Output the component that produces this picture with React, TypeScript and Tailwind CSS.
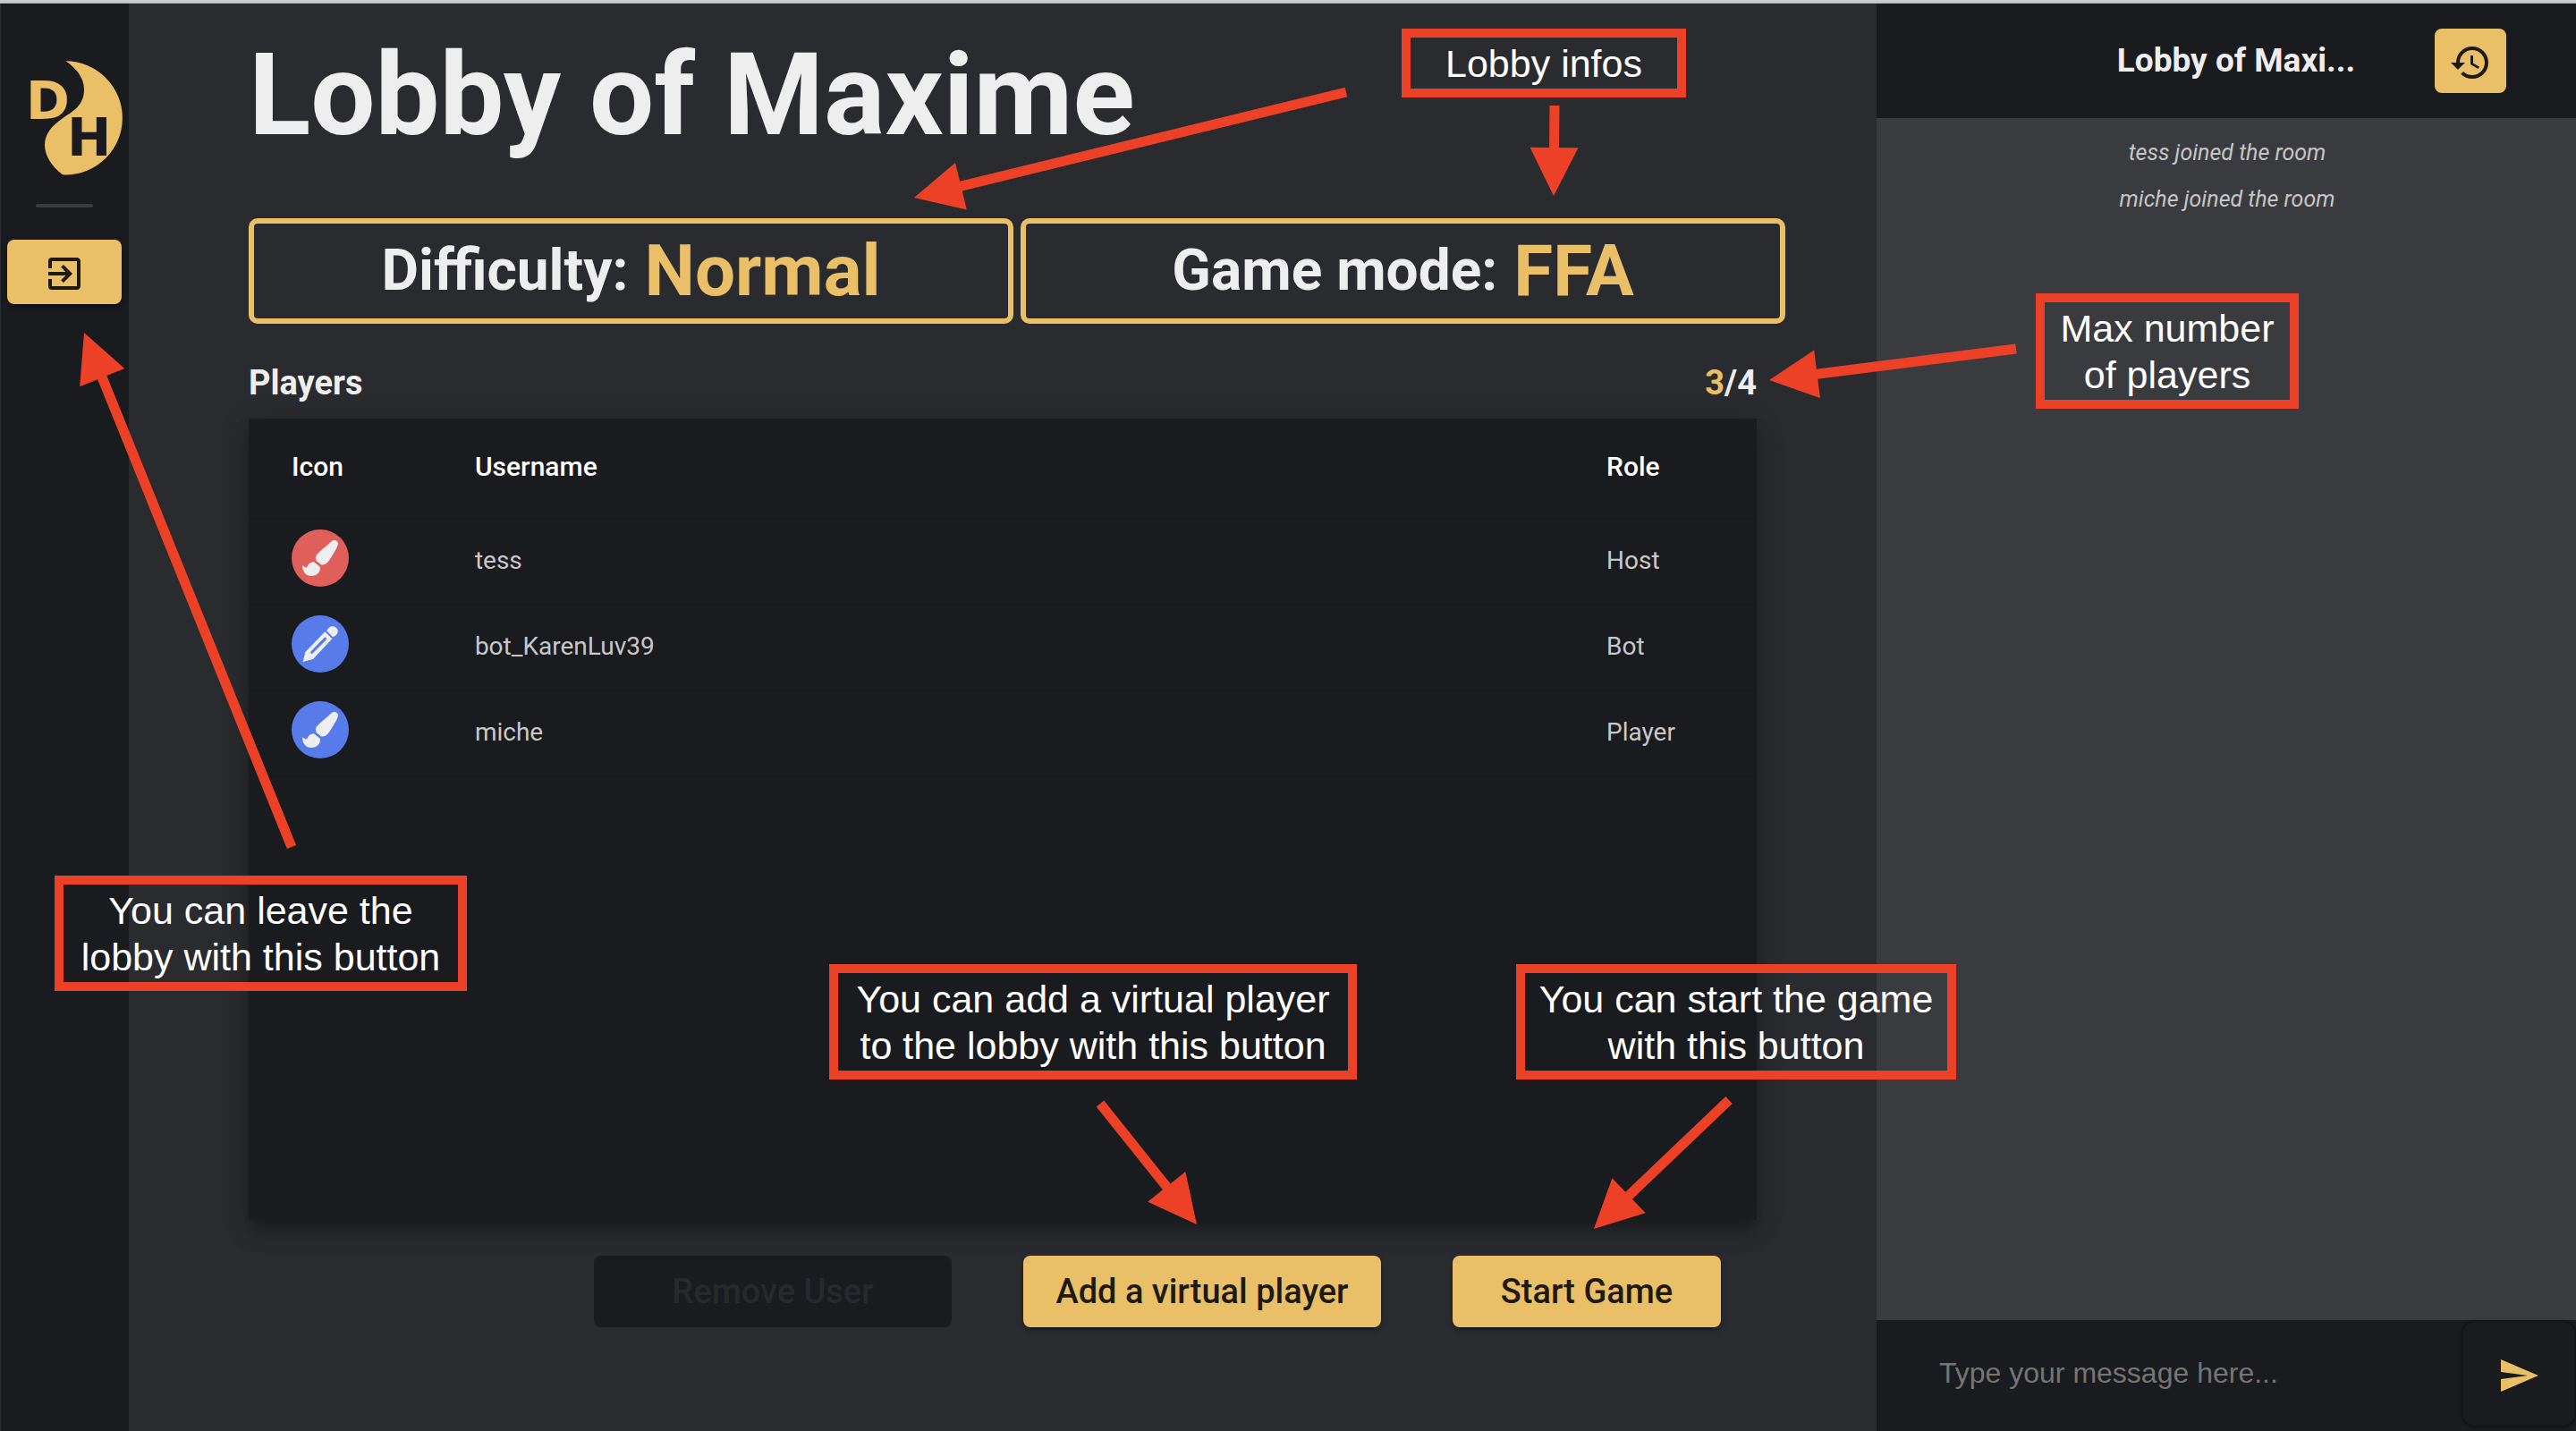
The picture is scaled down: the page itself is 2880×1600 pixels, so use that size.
import React from "react";
import { MdExitToApp, MdHistory, MdSend } from "react-icons/md";
import { FaPaintBrush } from "react-icons/fa";

const raised =
  "shadow-[0_6px_2px_-4px_rgba(0,0,0,0.2),0_4px_4px_rgba(0,0,0,0.14),0_2px_10px_rgba(0,0,0,0.12)]";

type Player = { name: string; role: string; icon: "brush" | "pencil"; color: string };

const players: Player[] = [
  { name: "tess", role: "Host", icon: "brush", color: "bg-[#e15f5b]" },
  { name: "bot_KarenLuv39", role: "Bot", icon: "pencil", color: "bg-[#587bea]" },
  { name: "miche", role: "Player", icon: "brush", color: "bg-[#587bea]" },
];

const messages = ["tess joined the room", "miche joined the room"];

function Logo() {
  return (
    <svg viewBox="0 68 144 128" className="mt-16 h-32 w-36 shrink-0" role="img" aria-label="DH">
      <path
        d="M73.5 68.3A63.6 63.6 0 0 1 73 195.6L70 195.3C59 187 50 175 50 162C50 149 59 140 69 133C80 125 94 119 94 100C94 87 85 76 73.5 68.3Z"
        fill="#e9bf68"
      />
      <text x="29" y="133" fill="#e9bf68" className="font-['DejaVu_Sans'] text-[59px] font-bold">D</text>
      <text x="75" y="174" fill="#1a1b1e" className="font-['DejaVu_Sans'] text-[59px] font-bold">H</text>
    </svg>
  );
}

function PencilIcon() {
  return (
    <svg viewBox="18 24 192 192" className="size-16" fill="#eeeeee" aria-hidden="true">
      <path d="M136 76C142 60 158 56 168 66C178 76 174 90 156 97Z" />
      <path
        fillRule="evenodd"
        d="M130 79L154 103L90 171L56 180L64 147ZM83 145Q80 150 83 152Q86 154 90 150L133 107Q137 102 134 99Q131 96 127 100Z"
      />
    </svg>
  );
}

function Sidebar() {
  return (
    <nav className="flex w-36 shrink-0 flex-col items-center bg-[#1a1b1e] shadow-[inset_1px_0_#2c2d31]">
      <Logo />
      <div className="mt-8 h-1 w-16 shrink-0 rounded-sm bg-[#3a3b3f]" />
      <button
        type="button"
        aria-label="Leave lobby"
        className={`mt-9 flex h-[72px] w-32 shrink-0 items-center justify-center rounded-lg bg-[#e9bf68] text-[#1f1a10] ${raised}`}
      >
        <MdExitToApp className="mt-1 size-12" />
      </button>
    </nav>
  );
}

function InfoBox({ label, value }: { label: string; value: string }) {
  return (
    <div className="flex h-[118px] flex-1 items-center justify-center gap-[18px] rounded-[10px] border-6 border-[#e9bf68] font-bold whitespace-nowrap">
      <span className="text-[64px] leading-none">{label}</span>
      <span className="text-[80px] leading-none text-[#e9bf68]">{value}</span>
    </div>
  );
}

const cell = "border-b-2 border-[#18191c]";

function PlayersTable() {
  return (
    <div className="min-h-0 flex-1 bg-[#1a1b1e] shadow-[0_10px_10px_-6px_rgba(0,0,0,0.2),0_16px_20px_2px_rgba(0,0,0,0.14),0_6px_28px_4px_rgba(0,0,0,0.12)]">
      <table className="w-full table-fixed border-separate border-spacing-0 text-left">
        <thead>
          <tr className="h-28 text-[30px] text-white">
            <th scope="col" className={`w-[15%] pb-1 pl-12 font-medium ${cell}`}>Icon</th>
            <th scope="col" className={`pb-1 font-medium ${cell}`}>Username</th>
            <th scope="col" className={`w-[168px] pb-1 font-medium ${cell}`}>Role</th>
          </tr>
        </thead>
        <tbody>
          {players.map((p) => (
            <tr key={p.name} className="h-24 text-[28px] text-[#c8c8c9]">
              <td className={`pt-3 pl-12 align-top ${cell}`}>
                <div className={`flex size-16 items-center justify-center rounded-full text-[#eeeeee] ${p.color}`}>
                  {p.icon === "brush" ? <FaPaintBrush className="size-10" /> : <PencilIcon />}
                </div>
              </td>
              <td className={cell}>{p.name}</td>
              <td className={cell}>{p.role}</td>
            </tr>
          ))}
        </tbody>
      </table>
    </div>
  );
}

function Lobby() {
  return (
    <main className="flex min-w-0 flex-1 flex-col px-[134px] pt-[38px] pb-[116px] text-[#eeeeee]">
      <h1 className="text-[128px] leading-none font-bold whitespace-nowrap">Lobby of Maxime</h1>
      <div className="mt-[74px] -mr-8 flex gap-2">
        <InfoBox label="Difficulty:" value="Normal" />
        <InfoBox label="Game mode:" value="FFA" />
      </div>
      <div className="mt-[42px] mb-4 flex justify-between text-[38px] leading-[48px] font-bold">
        <h2>Players</h2>
        <p>
          <span className="text-[#e9bf68]">3</span>/4
        </p>
      </div>
      <PlayersTable />
      <div className="mt-10 flex justify-end gap-20 pr-10 text-[38px] font-medium">
        <button type="button" disabled className="h-20 w-[400px] rounded-lg bg-[#1a1b1e] text-[#28292d]">
          Remove User
        </button>
        <button type="button" className={`h-20 w-[400px] rounded-lg bg-[#e9bf68] text-[#1f1a10] ${raised}`}>
          Add a virtual player
        </button>
        <button type="button" className={`h-20 w-[300px] rounded-lg bg-[#e9bf68] text-[#1f1a10] ${raised}`}>
          Start Game
        </button>
      </div>
    </main>
  );
}

function Chat() {
  return (
    <aside className="flex w-[782px] shrink-0 flex-col bg-[#3a3b3f]">
      <header className="flex h-32 shrink-0 items-center bg-[#1a1b1e] pr-[78px] pl-[180px]">
        <h2 className="flex-1 text-center text-[37px] font-bold whitespace-nowrap text-[#eeeeee]">Lobby of Maxi...</h2>
        <button
          type="button"
          aria-label="Message history"
          className="flex h-[72px] w-20 items-center justify-center rounded-lg bg-[#e9bf68] text-[#1f1a10]"
        >
          <MdHistory className="mt-1 size-12" />
        </button>
      </header>
      <ul className="flex-1 pt-[13px] pl-0.5 text-center text-[25px] leading-[52px] text-[#c6c6c7] italic">
        {messages.map((m) => (
          <li key={m}>{m}</li>
        ))}
      </ul>
      <form className="flex h-[124px] shrink-0 bg-[#1a1b1e] pt-0.5 pr-0.5 pb-1.5" onSubmit={(e) => e.preventDefault()}>
        <input
          type="text"
          aria-label="Message"
          placeholder="Type your message here..."
          className="min-w-0 flex-1 bg-transparent pb-0.5 pl-[70px] font-['Liberation_Sans',sans-serif] text-[32px] text-[#eeeeee] outline-none placeholder:text-[#757575]"
        />
        <button
          type="button"
          aria-label="Send"
          className="flex w-[124px] items-center justify-center rounded-xl text-[#e9bf68] shadow-[0_0_2px_2px_rgba(0,0,0,0.25)]"
        >
          <MdSend className="mt-1 size-12" />
        </button>
      </form>
    </aside>
  );
}

const callouts = [
  { lines: ["Lobby infos"], place: "left-[1567px] top-[32px] w-[318px]" },
  { lines: ["Max number", "of players"], place: "left-[2276px] top-[328px] w-[294px]" },
  { lines: ["You can leave the", "lobby with this button"], place: "left-[61px] top-[979px] w-[461px]" },
  { lines: ["You can add a virtual player", "to the lobby with this button"], place: "left-[927px] top-[1078px] w-[590px]" },
  { lines: ["You can start the game", "with this button"], place: "left-[1695px] top-[1078px] w-[492px]" },
];

// Tail x, tail y, tip x, tip y
const arrows = [
  [1505, 103, 1022, 221],
  [1738, 118, 1737, 219],
  [2254, 390, 1978, 425],
  [326, 947, 94, 372],
  [1230, 1234, 1338, 1369],
  [1933, 1230, 1782, 1374],
];

function Arrow({ points: [x1, y1, x2, y2] }: { points: number[] }) {
  const len = Math.hypot(x2 - x1, y2 - y1);
  const angle = (Math.atan2(y2 - y1, x2 - x1) * 180) / Math.PI;
  const neck = len - 54;
  return (
    <path
      transform={`translate(${x1} ${y1}) rotate(${angle})`}
      d={`M0 -5.5H${neck}V-27L${len} 0L${neck} 27V5.5H0Z`}
    />
  );
}

function Annotations() {
  return (
    <div className="pointer-events-none absolute inset-0 overflow-hidden font-['Liberation_Sans',sans-serif]">
      <svg className="absolute inset-0 size-full" fill="#ec4126" aria-hidden="true">
        {arrows.map((a, i) => (
          <Arrow key={i} points={a} />
        ))}
      </svg>
      {callouts.map((c) => (
        <p
          key={c.lines[0]}
          className={`absolute border-10 border-[#ec4126] pt-[3px] pb-0.5 text-center text-[43px] leading-[52px] whitespace-nowrap text-white ${c.place}`}
        >
          {c.lines.map((l) => (
            <span key={l} className="block">{l}</span>
          ))}
        </p>
      ))}
    </div>
  );
}

export default function App() {
  return (
    <div className="relative flex h-screen flex-col bg-[#2a2b2f] font-[Roboto,sans-serif]">
      <div className="h-1 shrink-0 border-b border-[#a9aaa9] bg-[#cbccca]" />
      <div className="flex min-h-0 flex-1">
        <Sidebar />
        <Lobby />
        <Chat />
      </div>
      <Annotations />
    </div>
  );
}
